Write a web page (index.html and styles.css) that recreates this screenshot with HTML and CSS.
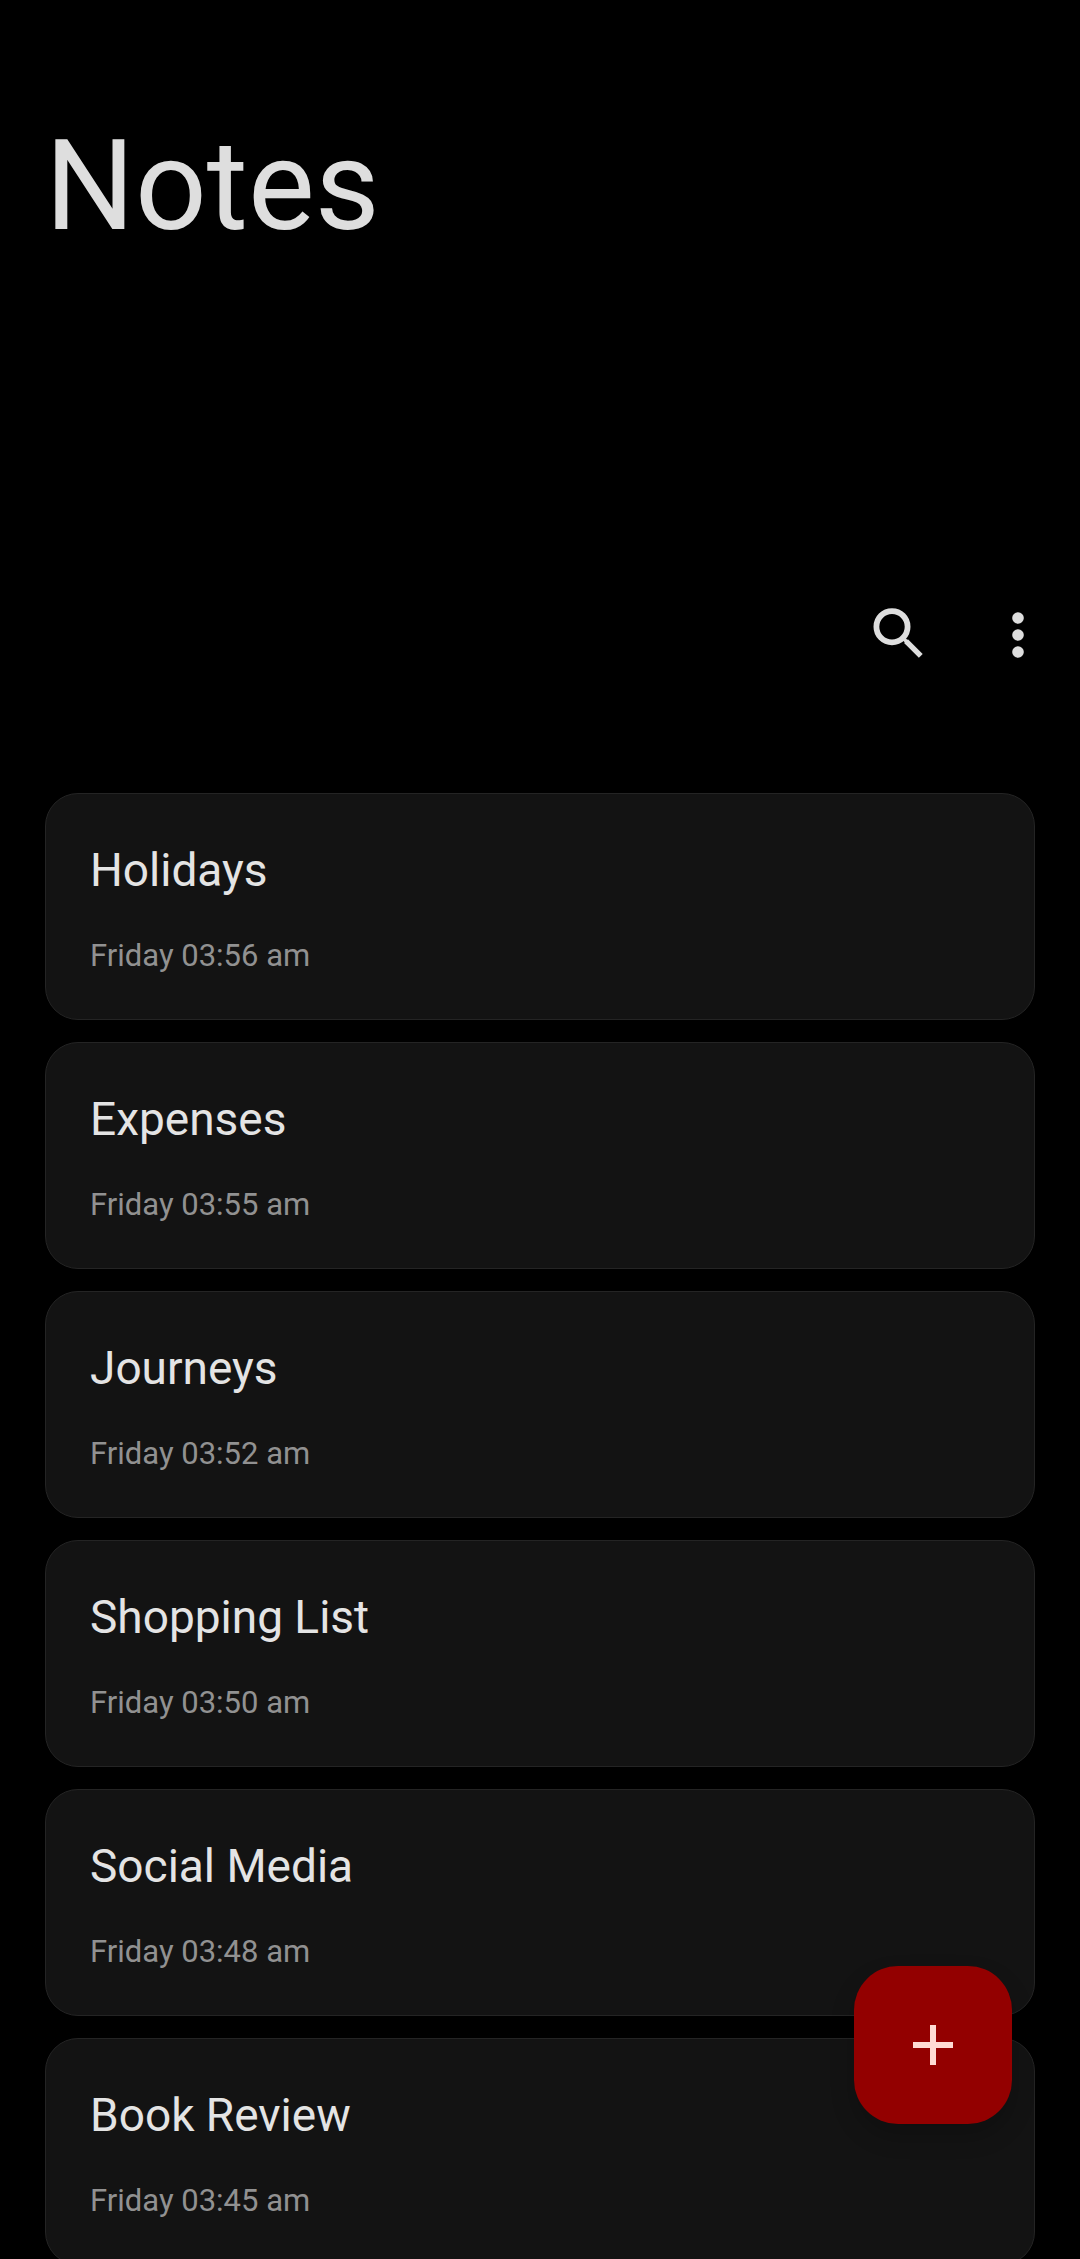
FILE: index.html
```html
<!DOCTYPE html>
<html lang="en">
<head>
<meta charset="utf-8">
<meta name="viewport" content="width=device-width, initial-scale=1">
<title>Notes</title>
<link rel="stylesheet" href="styles.css">
</head>
<body>
<main class="app">
  <header class="header">
    <h1 class="page-title">Notes</h1>
    <div class="toolbar">
      <button class="icon-button" type="button" aria-label="Search">
        <svg width="60" height="60" viewBox="0 0 60 60" fill="none" stroke="currentColor">
          <circle cx="24" cy="21.7" r="15.6" stroke-width="5.8"/>
          <path d="M38 36.1 52.8 50.9" stroke-width="5.4"/>
          <path d="M34.5 32.5 39.2 37.2" stroke-width="3.6" stroke-linecap="round"/>
        </svg>
      </button>
      <button class="icon-button" type="button" aria-label="More options">
        <svg width="60" height="60" viewBox="0 0 60 60" fill="currentColor">
          <circle cx="30" cy="13" r="5.8"/>
          <circle cx="30" cy="30" r="5.8"/>
          <circle cx="30" cy="47" r="5.8"/>
        </svg>
      </button>
    </div>
  </header>
  <ul class="notes">
    <li class="note"><h2 class="note-title">Holidays</h2><p class="note-date">Friday 03:56 am</p></li>
    <li class="note"><h2 class="note-title">Expenses</h2><p class="note-date">Friday 03:55 am</p></li>
    <li class="note"><h2 class="note-title">Journeys</h2><p class="note-date">Friday 03:52 am</p></li>
    <li class="note"><h2 class="note-title">Shopping List</h2><p class="note-date">Friday 03:50 am</p></li>
    <li class="note"><h2 class="note-title">Social Media</h2><p class="note-date">Friday 03:48 am</p></li>
    <li class="note"><h2 class="note-title">Book Review</h2><p class="note-date">Friday 03:45 am</p></li>
  </ul>
</main>
<button class="fab" type="button" aria-label="Add note">
  <svg width="40" height="40" viewBox="0 0 40 40" fill="currentColor">
    <path d="M17 0h6v17h17v6H23v17h-6V23H0v-6h17z"/>
  </svg>
</button>
</body>
</html>
```
FILE: styles.css
```css
* {
  box-sizing: border-box;
  margin: 0;
  padding: 0;
}

body {
  background: #000;
  color: #dedede;
  font-family: Roboto, "Liberation Sans", sans-serif;
}

button {
  border: 0;
  background: none;
  color: inherit;
  cursor: pointer;
}

.app {
  height: 100vh;
  overflow-y: auto;
  scrollbar-width: none;
}

.header {
  padding-top: 112px;
}

.page-title {
  padding: 0 45px;
  font-size: 126px;
  font-weight: 400;
  line-height: 148px;
}

.toolbar {
  display: flex;
  justify-content: flex-end;
  margin-top: 315px;
  padding-right: 2px;
}

.icon-button {
  display: grid;
  place-items: center;
  width: 120px;
  height: 120px;
}

.notes {
  display: flex;
  flex-direction: column;
  gap: 22px;
  padding: 98px 45px 22px;
  list-style: none;
}

.note {
  display: flex;
  flex-direction: column;
  gap: 34px;
  padding: 44px 44px 43px;
  border: 1px solid #242424;
  border-radius: 33px;
  background: #131313;
}

.note-title {
  color: #e4e4e4;
  font-size: 46px;
  font-weight: 400;
  line-height: 64px;
}

.note-date {
  color: #919191;
  font-size: 31px;
  line-height: 40px;
}

.fab {
  position: fixed;
  right: 68px;
  bottom: 135px;
  display: grid;
  place-items: center;
  width: 158px;
  height: 158px;
  border-radius: 44px;
  background: #930000;
  color: #ffdad4;
  box-shadow: 0 12px 24px rgba(0, 0, 0, 0.2);
}
```
